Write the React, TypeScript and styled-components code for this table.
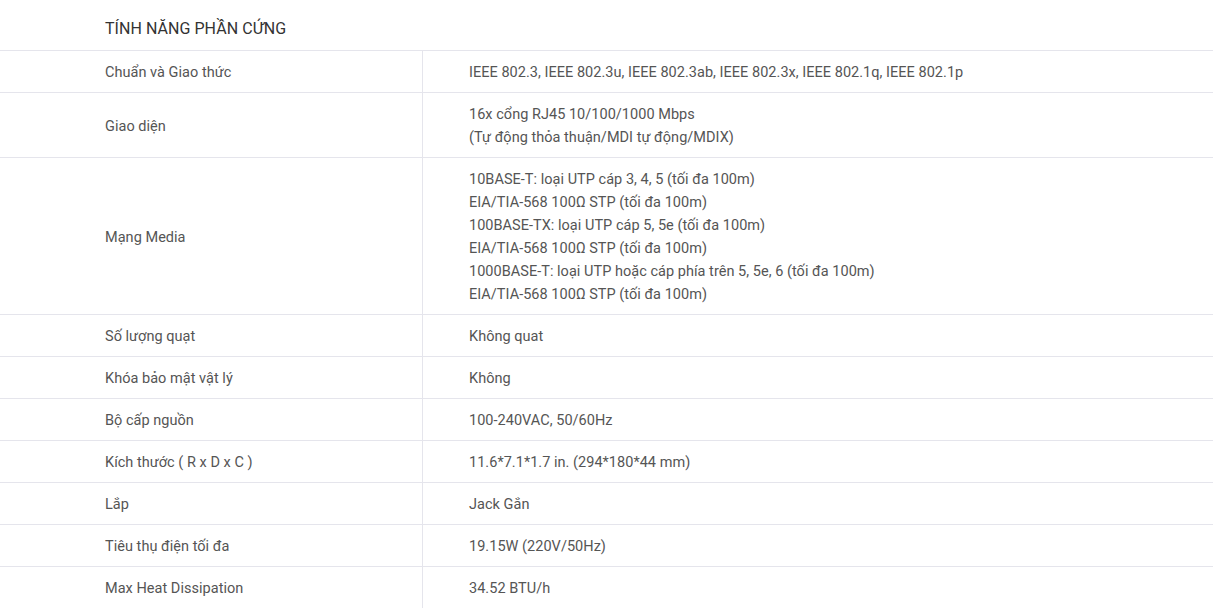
import React from "react";
import styled, { createGlobalStyle } from "styled-components";

const Global = createGlobalStyle`
  html, body { margin: 0; padding: 0; background: #fff; }
  body { font-family: Roboto, "Noto Sans", Arial, sans-serif; }
`;

const Section = styled.section`
  width: 1213px;
  background: #fff;
`;

const Heading = styled.h2`
  margin: 0;
  height: 50px;
  box-sizing: border-box;
  padding: 6px 0 0 105px;
  display: flex;
  align-items: center;
  font-size: 16px;
  font-weight: 400;
  color: #333;
  letter-spacing: 0.05px;
`;

const Table = styled.div`
  display: flex;
  flex-direction: column;
`;

const Row = styled.div`
  display: grid;
  grid-template-columns: 423px 1fr;
  border-top: 1px solid #e5e5ec;
`;

const Cell = styled.div<{ $label?: boolean }>`
  box-sizing: border-box;
  padding: 10px 0 8px ${(p) => (p.$label ? "105px" : "46px")};
  border-right: ${(p) => (p.$label ? "1px solid #e5e5ec" : "none")};
  display: flex;
  flex-direction: column;
  justify-content: center;
  font-size: 14.5px;
  letter-spacing: 0.03px;
  line-height: 23px;
  color: #555;
`;

const Line = styled.div`
  white-space: nowrap;
`;

const rows: [string, string[]][] = [
  ["Chuẩn và Giao thức", ["IEEE 802.3, IEEE 802.3u, IEEE 802.3ab, IEEE 802.3x, IEEE 802.1q, IEEE 802.1p"]],
  ["Giao diện", ["16x cổng RJ45 10/100/1000 Mbps", "(Tự động thỏa thuận/MDI tự động/MDIX)"]],
  [
    "Mạng Media",
    [
      "10BASE-T: loại UTP cáp 3, 4, 5 (tối đa 100m)",
      "EIA/TIA-568 100Ω STP (tối đa 100m)",
      "100BASE-TX: loại UTP cáp 5, 5e (tối đa 100m)",
      "EIA/TIA-568 100Ω STP (tối đa 100m)",
      "1000BASE-T: loại UTP hoặc cáp phía trên 5, 5e, 6 (tối đa 100m)",
      "EIA/TIA-568 100Ω STP (tối đa 100m)",
    ],
  ],
  ["Số lượng quạt", ["Không quat"]],
  ["Khóa bảo mật vật lý", ["Không"]],
  ["Bộ cấp nguồn", ["100-240VAC, 50/60Hz"]],
  ["Kích thước ( R x D x C )", ["11.6*7.1*1.7 in. (294*180*44 mm)"]],
  ["Lắp", ["Jack Gắn"]],
  ["Tiêu thụ điện tối đa", ["19.15W (220V/50Hz)"]],
  ["Max Heat Dissipation", ["34.52 BTU/h"]],
];

export default function App() {
  return (
    <>
      <Global />
      <Section>
        <Heading>TÍNH NĂNG PHẦN CỨNG</Heading>
        <Table>
          {rows.map(([label, values]) => (
            <Row key={label}>
              <Cell $label>{label}</Cell>
              <Cell>
                {values.map((v, i) => (
                  <Line key={i}>{v}</Line>
                ))}
              </Cell>
            </Row>
          ))}
        </Table>
      </Section>
    </>
  );
}
